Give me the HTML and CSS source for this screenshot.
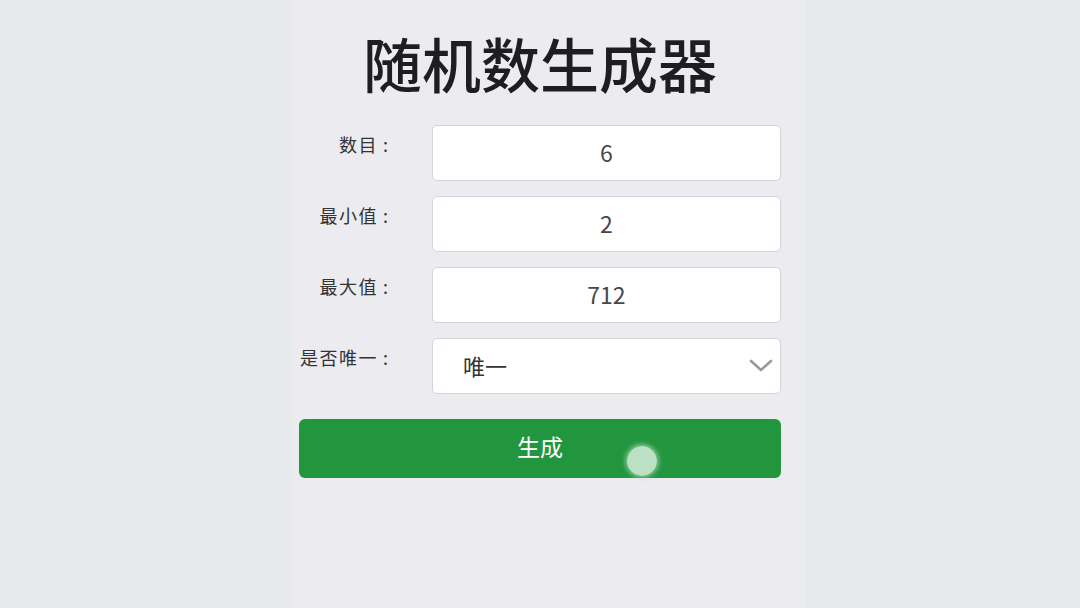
FILE: index.html
```html
<!DOCTYPE html>
<html lang="zh-CN">
<head>
<meta charset="utf-8">
<title>随机数生成器</title>
<link rel="stylesheet" href="styles.css">
</head>
<body>
<div class="screen">
  <h1 class="title">随机数生成器</h1>
  <div class="form">
    <div class="label">数目<span class="colon">:</span></div>
    <div class="field"><span class="value">6</span></div>
    <div class="label">最小值<span class="colon">:</span></div>
    <div class="field"><span class="value">2</span></div>
    <div class="label">最大值<span class="colon">:</span></div>
    <div class="field"><span class="value">712</span></div>
    <div class="label">是否唯一<span class="colon">:</span></div>
    <div class="field select">
      <span class="option">唯一</span>
      <svg class="chevron" width="24" height="14" viewBox="0 0 24 14"><polyline points="2,2 12,11 22,2" fill="none" stroke="#9a9a9e" stroke-width="2.6" stroke-linecap="round" stroke-linejoin="round"/></svg>
    </div>
  </div>
  <div class="button"><span class="button-text">生成</span><span class="touch"></span></div>
</div>
</body>
</html>
```
FILE: styles.css
```css
html, body {
  margin: 0;
  padding: 0;
}
body {
  background: #e7eaec;
  font-family: "Noto Sans CJK SC", "Noto Sans", sans-serif;
  height: 608px;
  overflow: hidden;
}
.screen {
  width: 513px;
  height: 608px;
  margin-left: 292px;
  background: #ebebf0;
  padding: 28px 24px 0 7px;
  box-sizing: border-box;
}
.title {
  margin: 0 0 27px 0;
  font-size: 59px;
  line-height: 70px;
  font-weight: 500;
  color: #1e1e20;
  text-align: center;
}
.form {
  display: grid;
  grid-template-columns: 89px 349px;
  column-gap: 44px;
  row-gap: 15px;
}
.label {
  text-align: right;
  font-size: 18px;
  line-height: 24px;
  padding-top: 7px;
  color: #333;
  white-space: nowrap;
  letter-spacing: 1.5px;
}
.colon {
  margin-left: 5px;
  letter-spacing: 0;
}
.field {
  height: 56px;
  box-sizing: border-box;
  background: #fff;
  border: 1px solid #d3d3da;
  border-radius: 5px;
  display: flex;
  align-items: center;
  justify-content: center;
}
.value {
  font-family: "Noto Sans CJK SC", sans-serif;
  font-size: 23px;
  color: #474749;
  position: relative;
  top: -1px;
}
.select {
  justify-content: space-between;
  padding: 0 7px 0 30px;
}
.option {
  font-size: 22px;
  color: #333;
  position: relative;
  top: -1px;
}
.button {
  margin-top: 25px;
  height: 59px;
  background: #22963f;
  border-radius: 6px;
  color: #fff;
  font-size: 23px;
  display: flex;
  align-items: center;
  justify-content: center;
  position: relative;
}
.button-text {
  position: relative;
  top: -3px;
}
.touch {
  position: absolute;
  left: 328px;
  top: 27px;
  width: 30px;
  height: 30px;
  border-radius: 50%;
  background: rgba(205, 232, 210, 0.9);
  box-shadow: 0 0 4px 2px rgba(190, 225, 198, 0.6);
}
```
